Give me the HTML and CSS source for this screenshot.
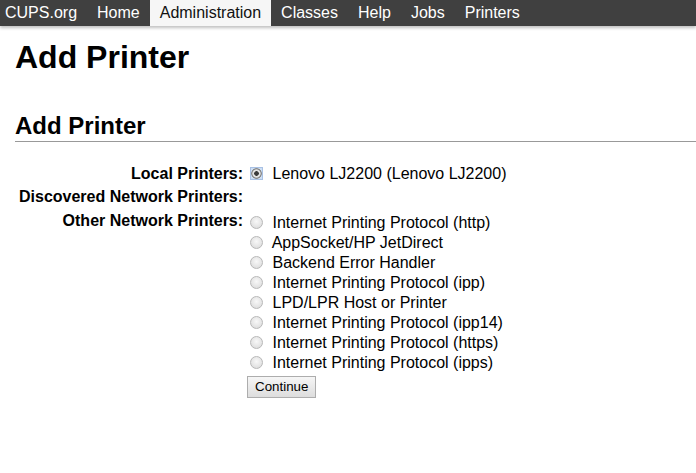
FILE: index.html
```html
<!DOCTYPE html>
<html>
<head>
<meta charset="utf-8">
<title>Add Printer - CUPS</title>
<link rel="stylesheet" href="styles.css">
</head>
<body>
<nav class="nav">
  <a class="nav-item first" href="#">CUPS.org</a>
  <a class="nav-item" href="#">Home</a>
  <a class="nav-item active" href="#">Administration</a>
  <a class="nav-item" href="#">Classes</a>
  <a class="nav-item" href="#">Help</a>
  <a class="nav-item" href="#">Jobs</a>
  <a class="nav-item" href="#">Printers</a>
</nav>
<main class="page">
  <h1 class="title">Add Printer</h1>
  <h2 class="subtitle">Add Printer</h2>
  <form class="form">
    <table class="fields">
      <tr class="row-local">
        <th class="label">Local Printers:</th>
        <td class="value">
          <div class="opt"><input class="radio" type="radio" name="dev" checked> Lenovo LJ2200 (Lenovo LJ2200)</div>
        </td>
      </tr>
      <tr>
        <th class="label">Discovered Network Printers:</th>
        <td class="value"></td>
      </tr>
      <tr>
        <th class="label">Other Network Printers:</th>
        <td class="value value-other">
          <div class="opt"><input class="radio" type="radio" name="dev"> Internet Printing Protocol (http)</div>
          <div class="opt"><input class="radio" type="radio" name="dev"> AppSocket/HP JetDirect</div>
          <div class="opt"><input class="radio" type="radio" name="dev"> Backend Error Handler</div>
          <div class="opt"><input class="radio" type="radio" name="dev"> Internet Printing Protocol (ipp)</div>
          <div class="opt"><input class="radio" type="radio" name="dev"> LPD/LPR Host or Printer</div>
          <div class="opt"><input class="radio" type="radio" name="dev"> Internet Printing Protocol (ipp14)</div>
          <div class="opt"><input class="radio" type="radio" name="dev"> Internet Printing Protocol (https)</div>
          <div class="opt"><input class="radio" type="radio" name="dev"> Internet Printing Protocol (ipps)</div>
          <div class="actions"><button class="btn" type="button">Continue</button></div>
        </td>
      </tr>
    </table>
  </form>
</main>
</body>
</html>
```
FILE: styles.css
```css
html, body {
  margin: 0;
  padding: 0;
  background: #fff;
}
body {
  font-family: "Liberation Sans", Arial, sans-serif;
  font-size: 16px;
  color: #000;
}
.nav {
  display: flex;
  height: 26px;
  background: #404040;
  box-shadow: 0 2px 3px rgba(0, 0, 0, 0.25);
}
.nav-item {
  display: block;
  padding: 0 10px;
  line-height: 26px;
  color: #fff;
  text-decoration: none;
}
.nav-item.first {
  padding-left: 5px;
}
.nav-item.active {
  background: #f6f6f6;
  color: #111;
}
.page {
  padding: 0 0 0 15px;
}
.title {
  margin: 13px 0 0;
  font-size: 32px;
  font-weight: bold;
  line-height: normal;
}
.subtitle {
  margin: 36px 0 0;
  padding-bottom: 1px;
  font-size: 24px;
  font-weight: bold;
  line-height: normal;
  border-bottom: 1px solid #999;
}
.form {
  margin: 19px 0 0 1px;
}
.fields {
  border-spacing: 2px;
}
.label {
  text-align: right;
  vertical-align: top;
  padding: 1px;
  font-weight: bold;
  line-height: 20px;
  white-space: nowrap;
}
.value {
  vertical-align: top;
  padding: 1px;
}
.value-other {
  padding-top: 3px;
}
.opt {
  line-height: 20px;
  height: 20px;
  white-space: nowrap;
}
.row-local .label,
.row-local .opt {
  line-height: 19px;
  height: 19px;
}
.radio {
  -webkit-appearance: none;
  appearance: none;
  box-sizing: border-box;
  width: 13px;
  height: 13px;
  margin: 0 5px 0 3px;
  vertical-align: -1px;
  border: 1px solid #b8b8b8;
  border-radius: 50%;
  background: radial-gradient(circle at 50% 40%, #f8f8f8 0, #e6e6e6 55%, #d6d6d6 100%);
}
.radio:checked {
  border-radius: 0;
  border: 1px solid #a9c1e4;
  background:
    radial-gradient(circle, #3a3a3a 0, #3a3a3a 2px, #e2e2e2 2.6px, #e2e2e2 3.8px, #8d8d8d 4.4px, #8d8d8d 5px, transparent 5.6px),
    #cddff5;
}
.actions {
  margin-top: 3px;
}
.btn {
  font-family: "Liberation Sans", Arial, sans-serif;
  font-size: 13.333px;
  color: #000;
  padding: 2px 7px 3px;
  margin: 0;
  border: 1px solid #adadad;
  border-radius: 0;
  background: linear-gradient(#f6f6f6, #dddddd);
}
```
